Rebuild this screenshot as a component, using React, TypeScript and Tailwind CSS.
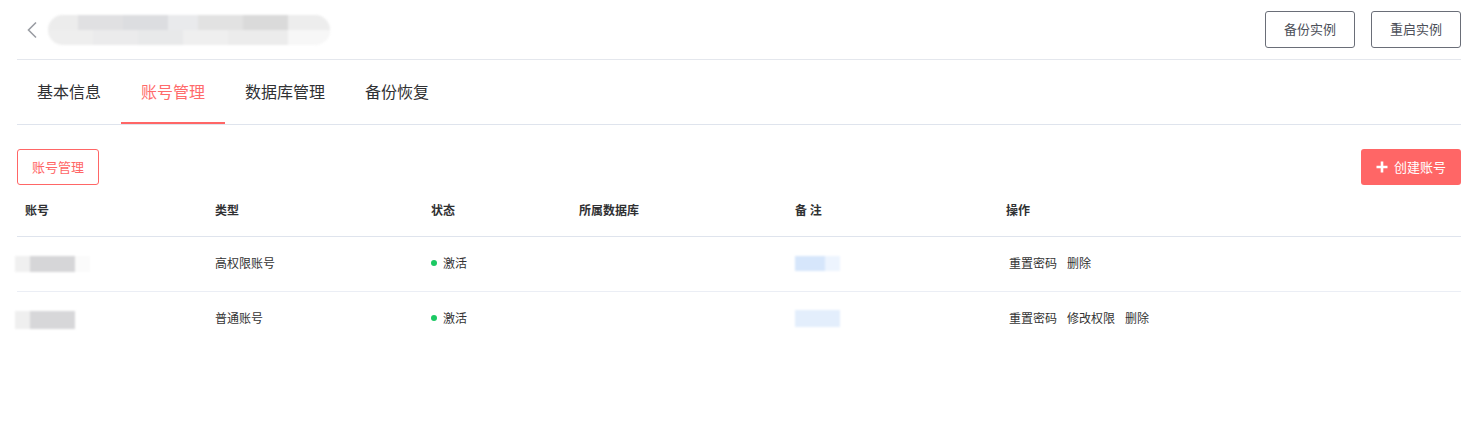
const font = { fontFamily: '"Noto Sans CJK SC", "Liberation Sans", sans-serif' };

const Blur = ({ cells, className }: { cells: string[]; className: string }) => (
  <div className={`flex blur-[1px] ${className}`}>
    {cells.map((c, i) => (
      <div key={i} className={`h-full ${c}`} />
    ))}
  </div>
);

export default function App() {
  const tabs = ["基本信息", "账号管理", "数据库管理", "备份恢复"];
  const rows = [
    {
      type: "高权限账号",
      actions: ["重置密码", "删除"],
      acc: ["w-[15px] bg-[#f0f0f0]", "w-[45px] bg-[#d6d6d8]", "w-[15px] bg-[#fbfbfb]"],
      accH: "h-[16px]",
      note: ["w-[30px] bg-[#d6e6fb]", "w-[15px] bg-[#edf4fe]"],
      noteH: "h-[15px]",
    },
    {
      type: "普通账号",
      actions: ["重置密码", "修改权限", "删除"],
      acc: ["w-[15px] bg-[#efefef]", "w-[45px] bg-[#d7d7d9]"],
      accH: "h-[18px]",
      note: ["w-[45px] bg-[#e3eefc]"],
      noteH: "h-[17px]",
    },
  ];

  return (
    <div className="w-full h-[424px] bg-white pl-[17px] pr-[16px] text-[#333]" style={font}>
      {/* header */}
      <div className="h-[60px] flex items-center justify-between border-b border-[#e4e7ed]">
        <div className="flex items-center">
          <svg width="14" height="18" viewBox="0 0 14 18" className="ml-[8px] mt-[1px]">
            <path d="M11 1.5L3.5 9L11 16.5" fill="none" stroke="#9a9da3" strokeWidth="1.6" />
          </svg>
          <div className="ml-[9px] h-[30px] w-[282px] rounded-[15px] overflow-hidden bg-[#f2f2f2] flex flex-col blur-[1px]">
            <div className="flex h-1/2">
              <div className="w-[30px] bg-[#ececec]" />
              <div className="w-[45px] bg-[#e0e0e2]" />
              <div className="w-[45px] bg-[#dcdde0]" />
              <div className="w-[30px] bg-[#e9eaec]" />
              <div className="w-[45px] bg-[#e2e2e2]" />
              <div className="w-[45px] bg-[#dadada]" />
              <div className="w-[42px] bg-[#ededed]" />
            </div>
            <div className="flex h-1/2">
              <div className="w-[45px] bg-[#eeeeee]" />
              <div className="w-[45px] bg-[#ebebec]" />
              <div className="w-[45px] bg-[#e8e9ea]" />
              <div className="w-[45px] bg-[#efefef]" />
              <div className="w-[60px] bg-[#ececec]" />
              <div className="w-[42px] bg-[#f7f7f7]" />
            </div>
          </div>
        </div>
        <div className="flex gap-[16px] -mt-[1px]">
          {["备份实例", "重启实例"].map((t) => (
            <button
              key={t}
              className="w-[90px] h-[37px] border border-[#6a6e78] rounded-[3px] text-[13px] text-[#4d5059] bg-white"
            >
              {t}
            </button>
          ))}
        </div>
      </div>

      {/* tabs */}
      <div className="flex h-[65px] border-b border-[#dfe4ed]">
        {tabs.map((t, i) => (
          <div
            key={t}
            className={`px-5 h-full flex items-center text-[16px] border-b-2 -mb-[1px] pb-[1px] ${
              i === 1 ? "text-[#ff6b6b] border-[#ff6666]" : "text-[#303133] border-transparent"
            }`}
          >
            {t}
          </div>
        ))}
      </div>

      {/* toolbar */}
      <div className="flex justify-between mt-[24px]">
        <button className="w-[82px] h-[36px] border border-[#ff6666] rounded-[3px] text-[13px] text-[#ff6666] bg-white">
          账号管理
        </button>
        <button className="w-[100px] h-[36px] rounded-[3px] bg-[#ff6666] text-white text-[13px] flex items-center justify-center gap-[6px]">
          <svg width="12" height="12" viewBox="0 0 12 12">
            <path d="M6 0.5V11.5M0.5 6H11.5" stroke="white" strokeWidth="2.6" />
          </svg>
          创建账号
        </button>
      </div>

      {/* table */}
      <div className="text-[12px]">
        <div className="grid grid-cols-[190px_216px_148px_216px_211px_1fr] h-[52px] pb-[2px] items-center border-b border-[#dfe4ed] font-bold text-[#303133]">
          <div className="pl-[8px]">账号</div>
          <div className="pl-[8px]">类型</div>
          <div className="pl-[8px]">状态</div>
          <div className="pl-[8px]">所属数据库</div>
          <div className="pl-[8px]">备 注</div>
          <div className="pl-[8px]">操作</div>
        </div>
        {rows.map((r, i) => (
          <div
            key={i}
            className={`grid grid-cols-[190px_216px_148px_216px_211px_1fr] h-[55px] pb-[3px] items-center ${
              i === 0 ? "border-b border-[#ebeef5]" : ""
            }`}
          >
            <div className="-ml-[2px] pt-[3px]">
              <Blur cells={r.acc} className={r.accH} />
            </div>
            <div className="pl-[8px]">{r.type}</div>
            <div className="pl-[8px] flex items-center">
              <span className="w-[6px] h-[6px] rounded-full bg-[#1bc963] mr-[6px]" />
              激活
            </div>
            <div />
            <div className="pl-[8px] pt-[1px]">
              <Blur cells={r.note} className={r.noteH} />
            </div>
            <div className="pl-[11px] flex gap-[10px]">
              {r.actions.map((a) => (
                <span key={a}>{a}</span>
              ))}
            </div>
          </div>
        ))}
      </div>
    </div>
  );
}
